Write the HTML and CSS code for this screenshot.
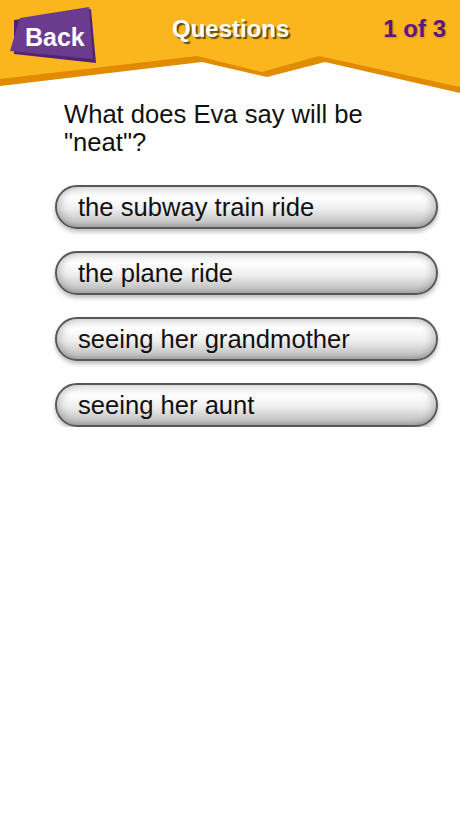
FILE: index.html
```html
<!DOCTYPE html>
<html lang="en">
<head>
    <meta charset="UTF-8">
    <meta name="viewport" content="width=device-width, initial-scale=1.0">
    <title>Questions</title>
    <link rel="stylesheet" href="styles.css">
</head>
<body>
    <header class="top-bar">
        <!-- orange banner with the zigzag bottom edge -->
        <svg class="top-bar-bg" viewBox="0 0 460 96" preserveAspectRatio="none">
            <polygon points="0,0 460,0 460,93 325,62 267,77 202,62 0,86" fill="#e08b00"/>
            <polygon points="0,0 460,0 460,87 319,56 262,72 197,56 0,79" fill="#fcb61d"/>
        </svg>
        <button class="back-btn">
            <svg class="back-shape" viewBox="0 0 100 66">
                <polygon points="14,20 91,9 96,63 14,54" fill="#4d2570"/>
                <polygon points="20,18 89,7 93,59 10,51" fill="#6b3b8e"/>
            </svg>
            <span>Back</span>
        </button>
        <h1 class="title">Questions</h1>
        <div class="counter">1 of 3</div>
    </header>

    <main class="quiz">
        <p class="question">What does Eva say will be "neat"?</p>
        <div class="answers">
            <button class="answer">the subway train ride</button>
            <button class="answer">the plane ride</button>
            <button class="answer">seeing her grandmother</button>
            <button class="answer">seeing her aunt</button>
        </div>
    </main>
</body>
</html>
```

FILE: styles.css
```css
body {
    margin: 0;
    background: #fff;
    font-family: "Liberation Sans", Arial, sans-serif;
}
.top-bar {
    position: relative;
    height: 96px;
    display: flex;
    align-items: flex-start;
}
.top-bar-bg {
    position: absolute;
    left: 0;
    top: 0;
    width: 100%;
    height: 100%;
}
.back-btn {
    position: relative;
    width: 100px;
    height: 66px;
    padding: 0;
    border: none;
    background: none;
    font-family: inherit;
    cursor: pointer;
}
.back-shape {
    position: absolute;
    left: 0;
    top: 0;
    width: 100px;
    height: 66px;
}
.back-btn span {
    position: relative;
    display: block;
    padding: 8px 0 0 25px;
    text-align: left;
    color: #fff;
    font-size: 25px;
    font-weight: bold;
}
.title {
    position: relative;
    margin: 15px 0 0 72px;
    color: #fff;
    font-size: 24px;
    font-weight: bold;
    text-shadow: 2px 2px 1px #5f4e12;
}
.counter {
    position: relative;
    margin: 15px 0 0 auto;
    padding-right: 14px;
    color: #5c1680;
    font-size: 24px;
    font-weight: bold;
    text-shadow: 1px 1px 2px rgba(120, 70, 0, 0.35);
}
.quiz {
    width: 383px;
    padding: 0 0 0 55px;
}
.question {
    margin: 0;
    padding: 4px 0 0 9px;
    font-size: 25.6px;
    line-height: 28px;
    color: #111;
}
.answers {
    display: flex;
    flex-direction: column;
    gap: 22px;
    margin-top: 29px;
}
.answer {
    height: 44px;
    padding: 0 0 0 21px;
    border: 2px solid #585858;
    border-radius: 22px;
    background: linear-gradient(#e4e4e4, #ffffff 25%, #eeeeee 55%, #c8c8c8 85%, #aaaaaa);
    box-shadow: inset 8px 0 8px -5px rgba(0, 0, 0, 0.22), inset -8px 0 8px -5px rgba(0, 0, 0, 0.22), 0 3px 4px rgba(0, 0, 0, 0.25);
    text-align: left;
    font-family: inherit;
    font-size: 25.6px;
    color: #111;
    cursor: pointer;
}
```
